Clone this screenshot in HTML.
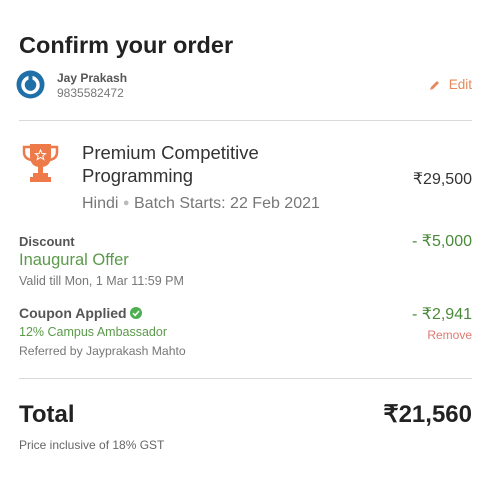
<!DOCTYPE html>
<html><head><meta charset="utf-8"><style>
body{margin:0;width:494px;height:484px;background:#fff;font-family:"Liberation Sans",sans-serif;position:relative;overflow:hidden}
.a{position:absolute;white-space:nowrap;line-height:1}
.r{right:22px;text-align:right}
.hr{position:absolute;left:19px;width:453px;height:1px;background:#d9d9d9}
</style></head><body>
<div class="a" style="left:19px;top:34px;font-size:23.5px;font-weight:bold;color:#222">Confirm your order</div>
<svg class="a" style="left:16px;top:70px" width="29" height="29" viewBox="0 0 29 29"><circle cx="14.5" cy="14.5" r="14" fill="#1f6fa8"/><circle cx="14.5" cy="15" r="7.5" fill="none" stroke="#fff" stroke-width="3.5"/><rect x="12.5" y="5" width="4" height="9" fill="#1f6fa8"/></svg>
<div class="a" style="left:57px;top:72px;font-size:12px;font-weight:bold;color:#555">Jay Prakash</div>
<div class="a" style="left:57px;top:87px;font-size:12px;color:#777">9835582472</div>
<svg class="a" style="left:429px;top:80px" width="11" height="11" viewBox="0 0 11 11"><path d="M1 10 L2 7 L8 1 L10 3 L4 9 Z" fill="#e8885a"/></svg>
<div class="a r" style="top:78px;font-size:13.5px;color:#e8885a">Edit</div>
<div class="hr" style="top:120px"></div>
<svg class="a" style="left:22px;top:142px" width="37" height="41" viewBox="0 0 37 41"><path d="M8 2 H29 V14 Q29 25 18.5 25 Q8 25 8 14 Z" fill="#ee7a4a"/><path d="M8 5 H2 V10 Q2 17 10 18 M29 5 H35 V10 Q35 17 27 18" fill="none" stroke="#ee7a4a" stroke-width="2.5"/><rect x="16" y="24" width="5" height="7" fill="#ee7a4a"/><rect x="11" y="31" width="15" height="4" fill="#ee7a4a"/><rect x="8" y="35" width="21" height="5" fill="#ee7a4a"/><path d="M18.5 8 L20 11.5 L23.5 11.7 L20.8 14 L21.8 17.5 L18.5 15.5 L15.2 17.5 L16.2 14 L13.5 11.7 L17 11.5 Z" fill="none" stroke="#fff" stroke-width="1"/></svg>
<div class="a" style="left:82px;top:144px;font-size:18.5px;color:#333">Premium Competitive</div>
<div class="a" style="left:82px;top:167px;font-size:18.5px;color:#333">Programming</div>
<div class="a" style="left:82px;top:196px;font-size:16px;color:#777">Hindi <span style="color:#bbb;font-size:11px;position:relative;top:-2px">●</span> Batch Starts: 22 Feb 2021</div>
<div class="a r" style="top:172px;font-size:16px;color:#333">₹29,500</div>
<div class="a" style="left:19px;top:235px;font-size:13px;font-weight:bold;color:#555">Discount</div>
<div class="a" style="left:19px;top:252px;font-size:16.5px;color:#5a9a4a">Inaugural Offer</div>
<div class="a" style="left:19px;top:275px;font-size:12.5px;color:#777">Valid till Mon, 1 Mar 11:59 PM</div>
<div class="a r" style="top:234px;font-size:16px;color:#4a8a3a">- ₹5,000</div>
<div class="a" style="left:19px;top:306px;font-size:14px;font-weight:bold;color:#555">Coupon Applied <svg width="12" height="12" viewBox="0 0 12 12" style="vertical-align:-1px"><circle cx="6" cy="6" r="6" fill="#4caf50"/><path d="M3 6.2 L5.2 8.3 L9 4" fill="none" stroke="#fff" stroke-width="1.6"/></svg></div>
<div class="a" style="left:19px;top:326px;font-size:12.5px;color:#5a9a4a">12% Campus Ambassador</div>
<div class="a" style="left:19px;top:345px;font-size:12.2px;color:#777">Referred by Jayprakash Mahto</div>
<div class="a r" style="top:307px;font-size:16px;color:#4a8a3a">- ₹2,941</div>
<div class="a r" style="top:329px;font-size:12px;color:#e07a70">Remove</div>
<div class="hr" style="top:378px"></div>
<div class="a" style="left:19px;top:403px;font-size:24px;font-weight:bold;color:#222">Total</div>
<div class="a r" style="top:403px;font-size:24px;font-weight:bold;color:#222">₹21,560</div>
<div class="a" style="left:19px;top:439px;font-size:12px;color:#666">Price inclusive of 18% GST</div>
</body></html>
